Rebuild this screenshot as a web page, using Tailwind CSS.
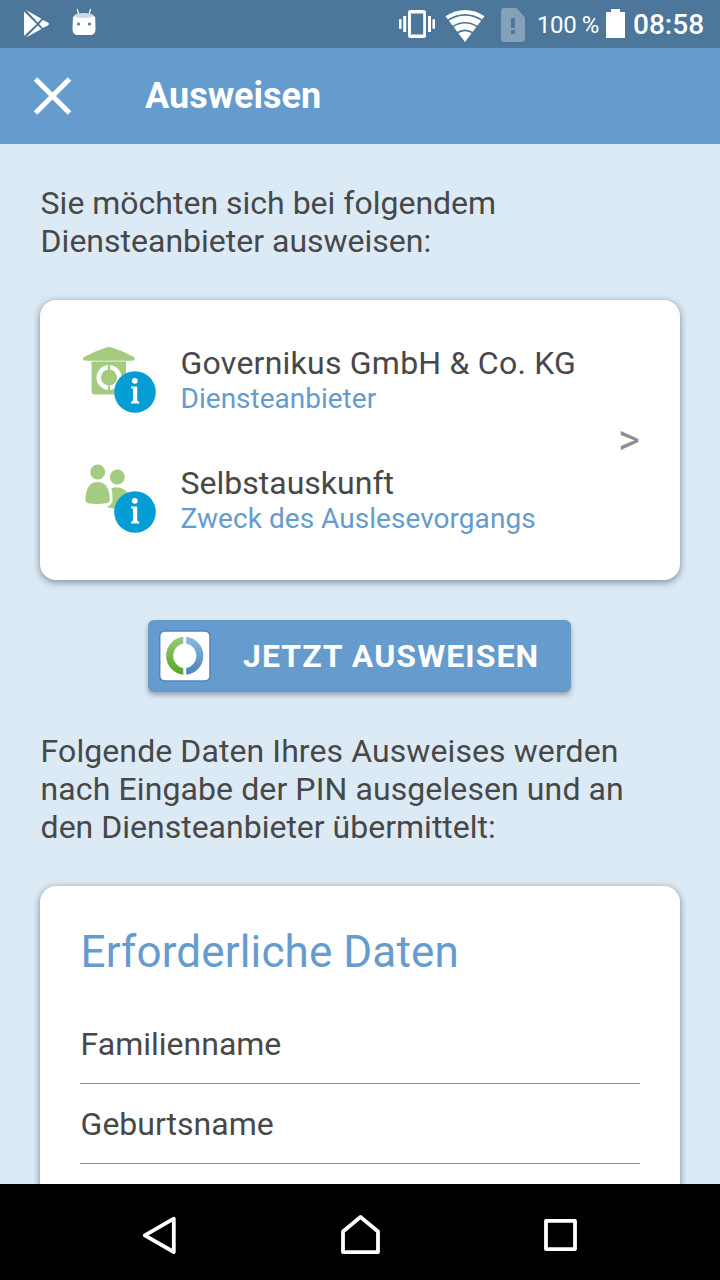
<!DOCTYPE html>
<html lang="de">
<head>
<meta charset="utf-8">
<title>Ausweisen</title>
<script src="https://cdn.jsdelivr.net/npm/@tailwindcss/browser@4"></script>
</head>
<body class="flex h-[1280px] w-[720px] flex-col overflow-hidden bg-[#dceaf5] font-[Roboto,sans-serif] text-[32px] leading-[38px] text-[#484848]">
  <!-- Status bar -->
  <div class="flex h-12 shrink-0 items-center bg-[#4c779b] text-white">
    <svg class="h-12 w-[120px]" viewBox="0 0 120 48" fill="#fff">
      <path d="M24 11.500v24.600L36.700 24zM26 10l11.800 12.600 3.600-3.800zM26 37.600l11.800-12.200 3.600 3.500zM39.200 24l3.600-4 5 2.600q2.400 1.400 0 2.800l-5 2.700z"/>
      <path d="M73 17q1-2 11-2t11.200 2l.3 12q0 6-5.500 6h-12q-5.500 0-5.500-6z"/>
      <path d="M74 15.500q2-2.500 10-2.500t10 2.500q-2 2.500-10 2.500t-10-2.500z" fill="#cdd8e3"/>
      <path d="M77.200 9l1.400 5M90.600 9l-1.400 5" stroke="#fff" stroke-width="1.200"/>
      <circle cx="78.500" cy="24" r="1.500" fill="#4c779b"/><circle cx="89.500" cy="24" r="1.500" fill="#4c779b"/>
    </svg>
    <svg class="ml-[270px] h-12 w-[147px]" viewBox="390 0 147 48" fill="#fff">
      <path fill-rule="evenodd" d="M410.500 10h13q2.500 0 2.500 2.500v23q0 2.500-2.500 2.500h-13q-2.500 0-2.500-2.500v-23q0-2.500 2.500-2.500zM411 13.500v21h12.200v-21zM403.200 16h3v16h-3zM399 19.300h2.500v9.400H399zM428 16h3v16h-3zM432.500 19.300h2.500v9.400h-2.500z"/>
      <path d="M445.500 16.200Q465 3.800 484.500 16.200L465 42z"/>
      <path d="M447 20.800q18-11.800 36 0M452 27q13-8.500 26 0M456.500 33.300q8.500-6 17 0" fill="none" stroke="#4c779b" stroke-width="1.700"/>
      <path fill-rule="evenodd" fill="#84a1ba" d="M504 8h12.500l8.500 9.500V38q0 4-4 4h-17q-3 0-3-4V12q0-4 3-4zM511 18v10h4V18zM511 30v4h4v-4z"/>
    </svg>
    <span class="w-[69px] whitespace-nowrap pt-0.5 text-[24px] leading-7 tracking-[-0.4px]">100 %</span>
    <svg class="h-12 w-[20px]" viewBox="606 0 20 48" fill="#fff"><path d="M606 12h5V9h9v3h5v26h-19z"/></svg>
    <span class="ml-[7px] whitespace-nowrap pt-0.5 text-[28px] font-medium leading-8">08:58</span>
  </div>

  <!-- Title bar -->
  <header class="flex h-24 shrink-0 items-center bg-[#659bcd] text-white">
    <svg class="h-24 w-[145px]" viewBox="0 0 145 96"><path d="M35.500 31l34 34M69.500 31l-34 34" stroke="#fff" stroke-width="5"/></svg>
    <h1 class="text-[36px] font-bold leading-[42px]">Ausweisen</h1>
  </header>

  <main class="flex min-h-0 flex-1 flex-col overflow-hidden px-10 pt-10">
    <p class="whitespace-nowrap pl-[0.6px]">Sie möchten sich bei folgendem<br>Diensteanbieter ausweisen:</p>

    <section class="mt-10 flex h-[280px] shrink-0 items-center rounded-2xl bg-white px-10 shadow-[0_2px_6px_1px_rgba(60,75,95,0.5)]">
      <div class="flex flex-1 flex-col gap-10">
        <div class="flex h-20 items-center gap-5">
          <svg class="size-20" viewBox="0 0 80 80">
            <g fill="#a4cc81">
              <path d="M3 19.500Q2.500 18 5 16.500Q15 11 27 7.300Q29 6.600 31 7.300Q43 11 53 16.500Q55.500 18 54.800 19.500Q54 20.700 50 20.700H8Q3.800 20.700 3 19.500z"/>
              <path d="M11.500 21.500h34.500v33h-31q-3.500 0-3.500-3.500z"/>
            </g>
            <circle cx="29" cy="37.500" r="10.300" fill="none" stroke="#fff" stroke-width="4.500"/>
            <path d="M29 24v27" stroke="#a4cc81" stroke-width="2"/>
            <circle cx="55" cy="52" r="20.800" fill="#069dd4"/>
            <g fill="#fff"><circle cx="54.800" cy="40.800" r="2.900"/><path d="M51 46.500h6.200v13.500q0 1.500 2 1.800v1.700h-8.200v-1.700q2-.3 2-1.800V50q0-1.800-2-2z"/></g>
          </svg>
          <div class="whitespace-nowrap pb-[2px] pl-[0.6px]">
            <div class="leading-[38px] tracking-[0.23px]">Governikus GmbH &amp; Co. KG</div>
            <div class="text-[28px] leading-[33px] text-[#659bcd]">Diensteanbieter</div>
          </div>
        </div>
        <div class="flex h-20 items-center gap-5">
          <svg class="size-20" viewBox="0 0 80 80">
            <g fill="#a4cc81">
              <circle cx="17.700" cy="12" r="7.500"/><circle cx="37.300" cy="17" r="7.500"/>
              <path d="M5.500 38Q6.500 22 17.500 22T29.700 37Q30.500 43 26.500 43.200Q17 44.800 8 43.200Q5 42.500 5.500 38z"/>
              <path d="M31.500 28.500Q36 26.500 41 28Q48 30.500 50 38L46 50Q38 50 26 46.800Q32.500 45.500 32.500 40Q32.500 33 31.500 28.500z"/>
            </g>
            <circle cx="55" cy="52" r="20.800" fill="#069dd4"/>
            <g fill="#fff"><circle cx="54.800" cy="40.800" r="2.900"/><path d="M51 46.500h6.200v13.500q0 1.500 2 1.800v1.700h-8.200v-1.700q2-.3 2-1.800V50q0-1.800-2-2z"/></g>
          </svg>
          <div class="whitespace-nowrap pb-[2px] pl-[0.6px]">
            <div class="leading-[38px]">Selbstauskunft</div>
            <div class="text-[28px] leading-[33px] tracking-[0.04px] text-[#659bcd]">Zweck des Auslesevorgangs</div>
          </div>
        </div>
      </div>
      <span class="text-[42px] font-normal leading-10 text-[#8e8e93]">&gt;</span>
    </section>

    <button class="ml-[108px] mt-10 flex h-[72px] w-[423px] shrink-0 items-center rounded-md bg-[#659bcd] pl-[11px] text-left font-bold text-white shadow-[0_3px_5px_0_rgba(60,75,95,0.45)]">
      <svg class="h-[52px] w-[52px]" viewBox="0 0 52 52">
        <defs>
          <linearGradient id="green" x2="0" y2="1"><stop offset="0" stop-color="#9bc87b"/><stop offset="1" stop-color="#52a823"/></linearGradient>
          <linearGradient id="blue" x2="0" y2="1"><stop offset="0" stop-color="#8bbbe2"/><stop offset="1" stop-color="#4a80be"/></linearGradient>
        </defs>
        <rect x=".7" y="1" width="50.300" height="50" rx="5" fill="#fff" stroke="#4c86c3" stroke-width="1.500"/>
        <path d="M24.300 6.800A19.100 19.100 0 0 0 24.300 44.800V38.100A12.500 12.500 0 0 1 24.300 13.500z" fill="url(#green)"/>
        <path d="M27.200 6.800A19.100 19.100 0 0 1 27.200 44.800V38.100A12.500 12.500 0 0 0 27.200 13.500z" fill="url(#blue)"/>
      </svg>
      <span class="ml-8 whitespace-nowrap tracking-[1.08px]">JETZT AUSWEISEN</span>
    </button>

    <p class="mt-10 whitespace-nowrap pl-[0.6px]"><span class="tracking-[0.09px]">Folgende Daten Ihres Ausweises werden</span><br><span class="tracking-[0.1px]">nach Eingabe der PIN ausgelesen und an</span><br>den Diensteanbieter übermittelt:</p>

    <section class="mt-10 h-[360px] shrink-0 rounded-2xl bg-white px-10 pt-10 shadow-[0_2px_6px_1px_rgba(60,75,95,0.5)]">
      <h2 class="mb-[26px] pl-[0.6px] text-[44px] leading-[52px] tracking-[0.12px] text-[#659bcd]">Erforderliche Daten</h2>
      <div class="flex h-20 items-center border-b border-[#8e8e8e] pl-[0.6px]">Familienname</div>
      <div class="flex h-20 items-center border-b border-[#8e8e8e] pl-[0.6px]">Geburtsname</div>
    </section>
  </main>

  <!-- Navigation bar -->
  <nav class="h-24 shrink-0 bg-black">
    <svg class="h-24 w-[720px]" viewBox="0 0 720 96" fill="none" stroke="#fff" stroke-width="3.800" stroke-linejoin="round">
      <path d="M173.800 34.700v33.300L144.800 51.400z"/>
      <path d="M343 47.500v20.600h35V47.500L360.500 33z"/>
      <path d="M546 36.900h29v28.200h-29z"/>
    </svg>
  </nav>
</body>
</html>
